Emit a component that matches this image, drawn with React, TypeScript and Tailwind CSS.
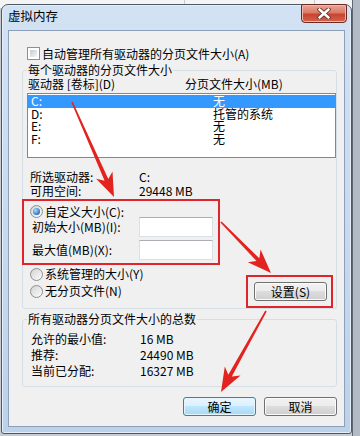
import React from "react"

// 驱动器列表
const drives = [
  { name: "C:", size: "无", selected: true },
  { name: "D:", size: "托管的系统", selected: false },
  { name: "E:", size: "无", selected: false },
  { name: "F:", size: "无", selected: false },
]

const totals = [
  { label: "允许的最小值:", value: "16 MB" },
  { label: "推荐:", value: "24490 MB" },
  { label: "当前已分配:", value: "16327 MB" },
]

const Checkbox = () => (
  <span className="block w-[13px] h-[13px] border border-[#8e8f8f] bg-white p-[2px] shrink-0">
    <span className="block w-full h-full bg-linear-to-br from-[#c9cdd2] to-[#f4f4f4]" />
  </span>
)

const Radio = ({ checked }: { checked?: boolean }) => (
  <span className="flex items-center justify-center w-[13px] h-[13px] rounded-full border border-[#8e8f8f] bg-linear-to-br from-[#d3d3d3] to-[#fcfcfc] shrink-0">
    {checked && (
      <span className="block w-[7px] h-[7px] rounded-full bg-[radial-gradient(circle_at_35%_35%,#a9dcfb,#2b74c4_70%,#1b4f8f)]" />
    )}
  </span>
)

const Button = ({ label, focused }: { label: string; focused?: boolean }) => (
  <div
    className={
      focused
        ? "w-[73px] h-[19px] rounded-[3px] border border-[#3c7fb1] bg-[linear-gradient(#eaf6fd,#d9f0fc_50%,#bee6fd_50%,#a7d9f5)] shadow-[inset_0_0_0_1px_#e6f5fd] flex items-center justify-center leading-[14px]"
        : "w-[73px] h-[19px] rounded-[3px] border border-[#707070] bg-[linear-gradient(#f2f2f2,#ebebeb_50%,#dddddd_50%,#cfcfcf)] shadow-[inset_0_0_0_1px_#fbfbfb] flex items-center justify-center leading-[14px]"
    }
  >
    {label}
  </div>
)

const TextBox = () => (
  <div className="w-[74px] h-[20px] bg-white border border-[#dbdfe6] border-t-[#abadb3]" />
)

// 红色箭头 (标注)
function arrow(x1: number, y1: number, x2: number, y2: number, head = 24, hw = 9) {
  const dx = x2 - x1
  const dy = y2 - y1
  const len = Math.hypot(dx, dy)
  const ux = dx / len
  const uy = dy / len
  const nx = -uy
  const ny = ux
  const w0 = 0.8
  const w1 = 2
  const sx = x2 - ux * head * 0.78
  const sy = y2 - uy * head * 0.78
  const bx = x2 - ux * head
  const by = y2 - uy * head
  const pts = [
    [x1 + nx * w0, y1 + ny * w0],
    [sx + nx * w1, sy + ny * w1],
    [bx + nx * hw, by + ny * hw],
    [x2, y2],
    [bx - nx * hw, by - ny * hw],
    [sx - nx * w1, sy - ny * w1],
    [x1 - nx * w0, y1 - ny * w0],
  ]
  return pts.map((p) => p.map((v) => v.toFixed(1)).join(",")).join(" ")
}

const Annotations = () => (
  <>
    <div className="absolute left-[22px] top-[199px] w-[198px] h-[66px] border-2 border-[#e0242b] pointer-events-none" />
    <div className="absolute left-[246px] top-[275px] w-[87px] h-[33px] border-2 border-[#e0242b] pointer-events-none" />
    <svg className="absolute inset-0 pointer-events-none" width="360" height="436" viewBox="0 0 360 436">
      <polygon points={arrow(72, 102, 114, 197)} fill="#e3231f" />
      <polygon points={arrow(221, 222, 271, 273)} fill="#e3231f" />
      <polygon points={arrow(266, 311, 221, 392)} fill="#e3231f" />
    </svg>
  </>
)

const CloseButton = () => (
  <div className="mr-[4px] -mt-[1px] w-[46px] h-[19px] rounded-b-[4px] rounded-t-[2px] border border-[#6a2a22] bg-[linear-gradient(#eba597,#dc7a68_45%,#c9442f_55%,#d4634c)] shadow-[inset_0_0_0_1px_#f2b8ab] flex items-center justify-center">
    <svg width="14" height="11" viewBox="0 0 14 11">
      <path d="M2.5 1.5 L11.5 9.5 M11.5 1.5 L2.5 9.5" stroke="#5a2620" strokeWidth="4.2" strokeLinecap="round" />
      <path d="M2.5 1.5 L11.5 9.5 M11.5 1.5 L2.5 9.5" stroke="#ffffff" strokeWidth="2.6" strokeLinecap="round" />
    </svg>
  </div>
)

export default function App() {
  return (
    <div className="relative w-[360px] h-[436px] overflow-hidden bg-[#c7ccd2] font-['Noto_Sans_CJK_SC','Noto_Sans',sans-serif] text-[12px] text-black">
      {/* 窗口后面的资源管理器 */}
      <div className="absolute inset-x-0 top-0 h-[8px] bg-[#f4f4f4] flex">
        <span className="w-[185px] h-[8px] border-r border-[#c9c9c9]" />
        <span className="w-[130px] h-[8px] border-r border-[#c9c9c9]" />
        <span className="flex-1" />
      </div>
      <div className="absolute right-0 top-0 bottom-0 w-[8px] bg-[#b3bcc6] border-l border-[#5d6873]" />

      {/* 虚拟内存窗口 */}
      <div className="absolute left-[1px] top-[4px] w-[351px] h-[430px] rounded-t-[7px] rounded-b-[3px] border border-[#4b5866] bg-linear-to-b from-[#d3e2f3] to-[#bcd2ea] shadow-[inset_0_0_0_1px_#e6eff9] flex flex-col">
        <div className="h-[25px] shrink-0 flex items-start justify-between">
          <span className="ml-[6px] mt-[3px] leading-[16px] text-[12.5px]">虚拟内存</span>
          <CloseButton />
        </div>

        <div className="ml-[6px] w-[337px] h-[397px] border border-[#8ca1b9] bg-[#f0f0f0] flex flex-col">
          <div className="mt-[16px] ml-[18px] h-[13px] flex items-center gap-[2px]">
            <Checkbox />
            <span className="leading-[13px]">自动管理所有驱动器的分页文件大小(A)</span>
          </div>

          {/* 每个驱动器 */}
          <div className="mt-[10px] ml-[13px] w-[315px] h-[239px] shrink-0 border border-[#d5dfe5] rounded-[3px] flex flex-col">
            <span className="-mt-[8px] ml-[4px] px-[1px] self-start h-[14px] leading-[14px] bg-[#f0f0f0]">每个驱动器的分页文件大小</span>
            <div className="ml-[5px] h-[14px] leading-[14px] flex">
              <span className="w-[157px]">驱动器 [卷标](D)</span>
              <span>分页文件大小(MB)</span>
            </div>
            <div className="mt-[2px] ml-[4px] w-[309px] h-[65px] shrink-0 border border-[#828790] bg-white pt-[1px]">
              {drives.map((d) => (
                <div
                  key={d.name}
                  className={`h-[12.5px] flex items-center pl-[3px] ${d.selected ? "bg-[#3399ff] text-white" : ""}`}
                >
                  <span className="w-[182px] leading-[12px]">{d.name}</span>
                  <span className="leading-[12px]">{d.size}</span>
                </div>
              ))}
            </div>

            <div className="mt-[12px] ml-[7px] h-[14px] leading-[14px] flex">
              <span className="w-[109px]">所选驱动器:</span>
              <span>C:</span>
            </div>
            <div className="ml-[7px] h-[14px] leading-[14px] flex">
              <span className="w-[109px]">可用空间:</span>
              <span>29448 MB</span>
            </div>

            <div className="mt-[8px] ml-[7px] h-[11px] flex items-center gap-[2px]">
              <Radio checked />
              <span className="leading-[14px]">自定义大小(C):</span>
            </div>
            <div className="ml-[9px] h-[20px] flex items-center">
              <span className="w-[107px] leading-[14px]">初始大小(MB)(I):</span>
              <TextBox />
            </div>
            <div className="mt-[3px] ml-[9px] h-[20px] flex items-center">
              <span className="w-[107px] leading-[14px]">最大值(MB)(X):</span>
              <TextBox />
            </div>

            <div className="mt-[7px] flex">
              <div className="ml-[7px] flex flex-col gap-[3px]">
                <div className="h-[14px] flex items-center gap-[2px]">
                  <Radio />
                  <span className="leading-[14px]">系统管理的大小(Y)</span>
                </div>
                <div className="h-[14px] flex items-center gap-[2px]">
                  <Radio />
                  <span className="leading-[14px]">无分页文件(N)</span>
                </div>
              </div>
              <div className="ml-auto mr-[9px] mt-[15px]">
                <Button label="设置(S)" />
              </div>
            </div>
          </div>

          {/* 总数 */}
          <div className="mt-[10px] ml-[13px] w-[315px] h-[68px] shrink-0 border border-[#d5dfe5] rounded-[3px] flex flex-col">
            <span className="-mt-[8px] ml-[4px] px-[1px] self-start h-[14px] leading-[14px] bg-[#f0f0f0]">所有驱动器分页文件大小的总数</span>
            <div className="mt-[5px] flex flex-col">
              {totals.map((t) => (
                <div key={t.label} className="ml-[8px] h-[16px] leading-[16px] flex">
                  <span className="w-[109px]">{t.label}</span>
                  <span>{t.value}</span>
                </div>
              ))}
            </div>
          </div>

          <div className="mt-[10px] mr-[7px] flex justify-end gap-[8px]">
            <Button label="确定" focused />
            <Button label="取消" />
          </div>
        </div>
      </div>

      <Annotations />
    </div>
  )
}
